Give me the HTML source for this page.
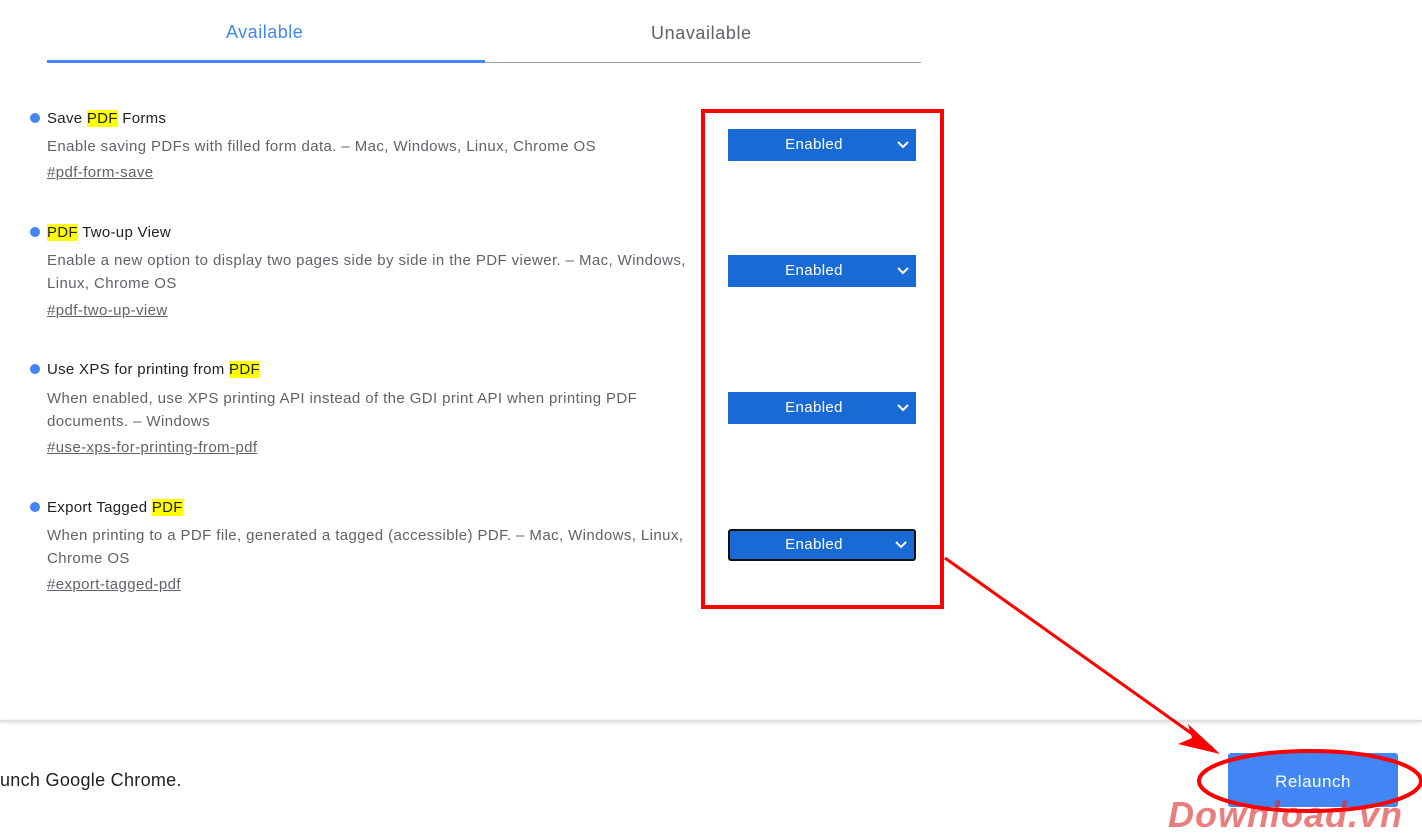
<!DOCTYPE html>
<html><head><style>
body{margin:0;width:1422px;height:832px;background:#fff;font-family:"Liberation Sans",Arial,sans-serif;position:relative;overflow:hidden}
.a{position:absolute;white-space:nowrap}
.t{font-size:15px;color:#202124;letter-spacing:0.3px}
.d{font-size:15px;color:#5f6368;line-height:23px;letter-spacing:0.4px}
.l{font-size:15px;color:#5f6368;text-decoration:underline;letter-spacing:0.4px}
.dot{position:absolute;width:10px;height:10px;border-radius:50%;background:#4285f4}
.h{background:#ff0}
.s{position:absolute;left:728px;width:188px;height:32px;background:#1a6ad6;color:#fff;font-size:15px;text-align:center;line-height:32px;box-sizing:border-box;padding-right:16px;letter-spacing:0.4px}
.s svg{position:absolute;right:7px;top:12px}
</style></head><body>
<div class="a" style="left:226px;top:22px;font-size:18px;color:#4285f4;letter-spacing:0.5px">Available</div>
<div class="a" style="left:651px;top:23px;font-size:18px;color:#5f6368;letter-spacing:0.6px">Unavailable</div>
<div class="a" style="left:47px;top:60px;width:438px;height:3px;background:#4285f4"></div>
<div class="a" style="left:485px;top:62px;width:436px;height:1px;background:#9aa0a6"></div>

<div class="dot" style="left:30px;top:113px"></div>
<div class="a t" style="left:47px;top:110px">Save <span class="h">PDF</span> Forms</div>
<div class="a d" style="left:47px;top:135px">Enable saving PDFs with filled form data. – Mac, Windows, Linux, Chrome OS</div>
<div class="a l" style="left:47px;top:164px">#pdf-form-save</div>

<div class="dot" style="left:30px;top:227px"></div>
<div class="a t" style="left:47px;top:224px"><span class="h">PDF</span> Two-up View</div>
<div class="a d" style="left:47px;top:249px">Enable a new option to display two pages side by side in the PDF viewer. – Mac, Windows,<br>Linux, Chrome OS</div>
<div class="a l" style="left:47px;top:302px">#pdf-two-up-view</div>

<div class="dot" style="left:30px;top:364px"></div>
<div class="a t" style="left:47px;top:361px">Use XPS for printing from <span class="h">PDF</span></div>
<div class="a d" style="left:47px;top:387px">When enabled, use XPS printing API instead of the GDI print API when printing PDF<br>documents. – Windows</div>
<div class="a l" style="left:47px;top:439px">#use-xps-for-printing-from-pdf</div>

<div class="dot" style="left:30px;top:502px"></div>
<div class="a t" style="left:47px;top:499px">Export Tagged <span class="h">PDF</span></div>
<div class="a d" style="left:47px;top:524px">When printing to a PDF file, generated a tagged (accessible) PDF. – Mac, Windows, Linux,<br>Chrome OS</div>
<div class="a l" style="left:47px;top:576px">#export-tagged-pdf</div>

<div class="s" style="top:129px">Enabled<svg width="12" height="8"><path d="M1 1l5 5 5-5" stroke="#fff" stroke-width="2" fill="none"/></svg></div>
<div class="s" style="top:255px">Enabled<svg width="12" height="8"><path d="M1 1l5 5 5-5" stroke="#fff" stroke-width="2" fill="none"/></svg></div>
<div class="s" style="top:392px">Enabled<svg width="12" height="8"><path d="M1 1l5 5 5-5" stroke="#fff" stroke-width="2" fill="none"/></svg></div>
<div class="s" style="top:529px;border:2px solid #111;border-radius:3px;line-height:28px">Enabled<svg width="12" height="8" style="top:10px"><path d="M1 1l5 5 5-5" stroke="#fff" stroke-width="2" fill="none"/></svg></div>

<div class="a" style="left:701px;top:109px;width:235px;height:492px;border:4px solid #f00"></div>

<div class="a" style="left:0;top:720px;width:1422px;height:2px;background:#e0e0e0;box-shadow:0 1px 3px rgba(0,0,0,.15)"></div>
<div class="a" style="left:0;top:770px;font-size:18px;color:#202124;letter-spacing:0.3px">unch Google Chrome.</div>
<div class="a" style="left:1228px;top:753px;width:170px;height:54px;background:#4285f4;border-radius:3px;color:#fff;font-size:17px;text-align:center;line-height:57px;letter-spacing:0.5px">Relaunch</div>
<div class="a" style="left:1168px;top:794px;font-size:36px;font-weight:bold;font-style:italic;color:rgba(220,40,40,.6);letter-spacing:1px">Download.vn</div>
<svg class="a" style="left:0;top:0" width="1422" height="832">
<ellipse cx="1310" cy="781" rx="111" ry="30" fill="none" stroke="#f00" stroke-width="4"/>
<line x1="945" y1="558" x2="1212" y2="748" stroke="#f00" stroke-width="3"/>
<path d="M1220 754 L1178 744 L1192 738 L1188 724 Z" fill="#f00"/>
</svg>
</body></html>
